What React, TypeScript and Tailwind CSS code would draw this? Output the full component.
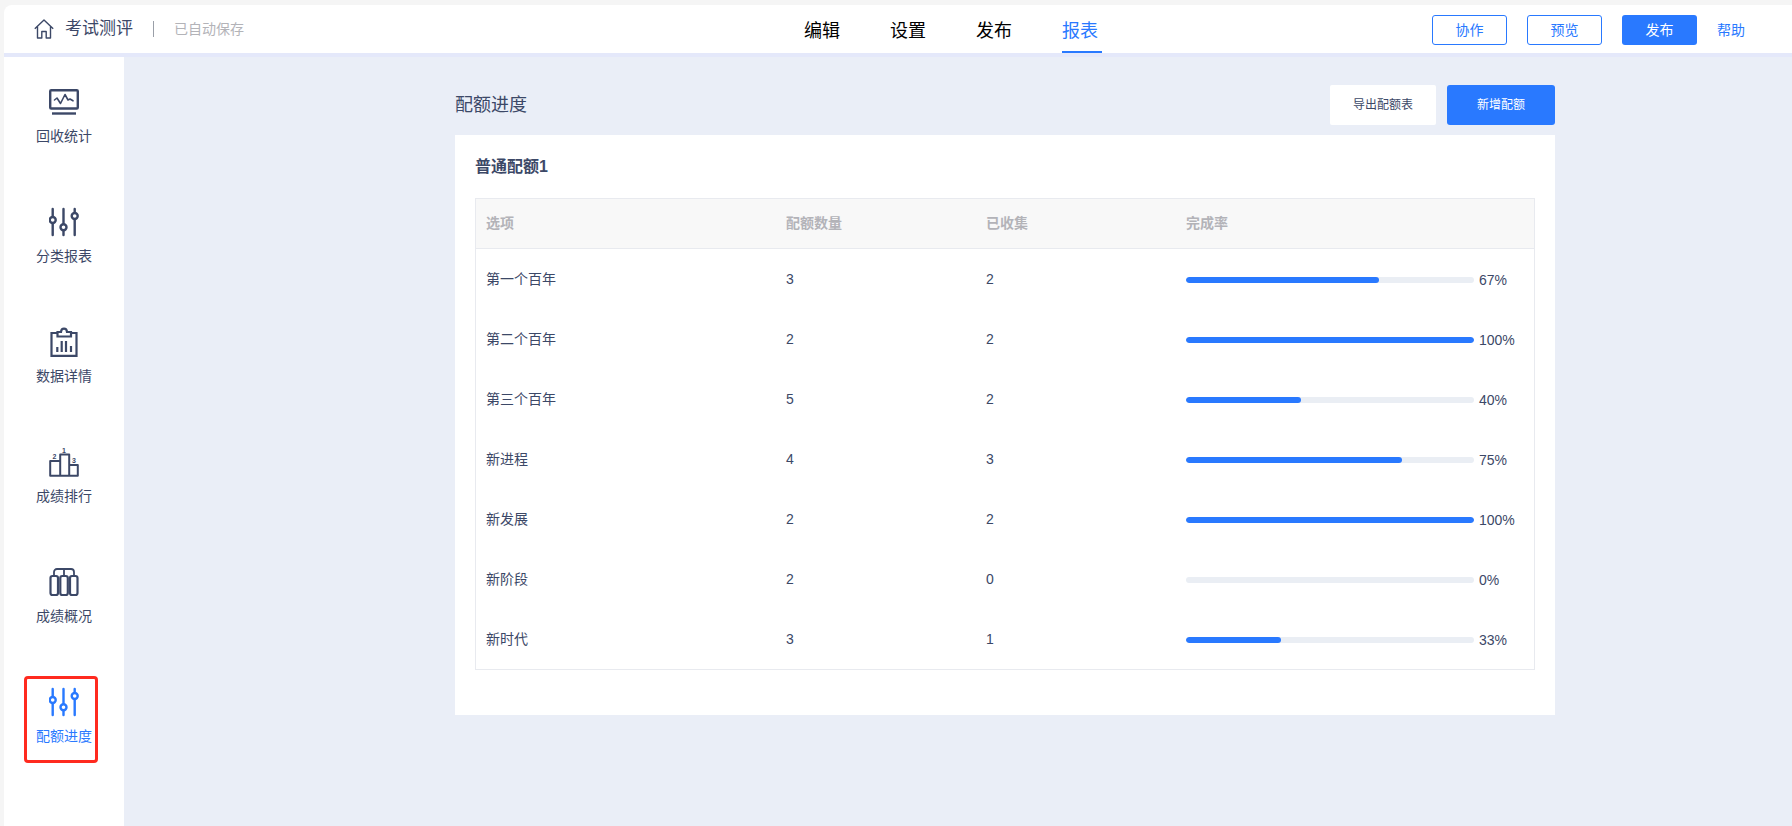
import { ReactNode } from "react";

const rows = [
  { name: "第一个百年", quota: 3, got: 2, pct: 67 },
  { name: "第二个百年", quota: 2, got: 2, pct: 100 },
  { name: "第三个百年", quota: 5, got: 2, pct: 40 },
  { name: "新进程", quota: 4, got: 3, pct: 75 },
  { name: "新发展", quota: 2, got: 2, pct: 100 },
  { name: "新阶段", quota: 2, got: 0, pct: 0 },
  { name: "新时代", quota: 3, got: 1, pct: 33 },
];

function Sliders() {
  return (
    <svg width="30" height="30" viewBox="0 0 30 30" fill="none" stroke="currentColor" strokeWidth="2.400" strokeLinecap="round">
      <path d="M3.700 2v7.500M3.700 16.500V28" />
      <circle cx="3.700" cy="13" r="3" />
      <path d="M14.500 2v14.800M14.500 23.800V28" />
      <circle cx="14.500" cy="20.300" r="3" />
      <path d="M25.700 2v3.500M25.700 12.500V28" />
      <circle cx="25.700" cy="9" r="3" />
    </svg>
  );
}

function Monitor() {
  return (
    <svg width="30" height="30" viewBox="0 0 30 30" fill="none" stroke="currentColor">
      <rect x="1.200" y="3.200" width="27.600" height="18.300" rx="1" strokeWidth="2.400" />
      <path d="M5.500 13l2.500-2 3.500 5.500 4.500-9 3 5.500 2-1 3 1.800" strokeWidth="1.600" strokeLinejoin="round" strokeLinecap="round" />
      <path d="M3 26.500h24" strokeWidth="2.400" />
    </svg>
  );
}

function Clipboard() {
  return (
    <svg width="30" height="30" viewBox="0 0 30 30" fill="none" stroke="currentColor" strokeWidth="2.200">
      <path d="M8 6H2.500V28.800H27.500V6H22.500" />
      <path d="M8.500 9.500V5H12c0.300-4.500 5.700-4.500 6 0H22v4.500z" />
      <path d="M8.300 25v-5M12.700 25v-11M17 25v-11M22 25v-6" strokeWidth="2.200" />
    </svg>
  );
}

function Podium() {
  return (
    <svg width="30" height="30" viewBox="0 0 30 30" fill="none" stroke="currentColor" strokeWidth="2" strokeLinejoin="round">
      <path d="M1.200 14h10v14.800h-10zM11.200 7.500h9V28.800h-9zM20.200 18h8.600v10.800h-8.600z" />
      <g fill="currentColor" stroke="none" fontSize="7" fontWeight="700" textAnchor="middle">
        <text x="15" y="5.500">1</text>
        <text x="5.500" y="12">2</text>
        <text x="25" y="16">3</text>
      </g>
    </svg>
  );
}

function Columns() {
  return (
    <svg width="30" height="30" viewBox="0 0 30 30" fill="none" stroke="currentColor" strokeWidth="2.200">
      <rect x="1.500" y="9" width="7.500" height="19" rx="2" />
      <rect x="11.300" y="9" width="7.500" height="19" rx="2" />
      <rect x="21" y="9" width="7.500" height="19" rx="2" />
      <path d="M5 9V5a3 3 0 0 1 3-3h14a3 3 0 0 1 3 3v4M15 2v7" strokeWidth="1.800" />
    </svg>
  );
}

function SideItem({ icon, label, active }: { icon: ReactNode; label: string; active?: boolean }) {
  return (
    <div className={`h-[120px] pt-[30px] flex flex-col items-center ${active ? "text-[#2979ff]" : "text-[#3c4867]"}`}>
      {icon}
      <div className="mt-[9px] text-[14px] leading-[20px]">{label}</div>
    </div>
  );
}

function OutlineBtn({ children }: { children: ReactNode }) {
  return (
    <div className="w-[75px] h-[30px] flex items-center justify-center border border-[#2979ff] rounded-[3px] text-[14px] text-[#2979ff]">
      {children}
    </div>
  );
}

export default function App() {
  return (
    <div
      className="w-[1792px] h-[826px] overflow-hidden relative bg-[#f5f5f5] pt-[5px] pl-[4px] flex flex-col text-[#3c4867]"
      style={{ fontFamily: '"Liberation Sans", "Noto Sans CJK SC", sans-serif' }}
    >
      <header className="h-[52px] shrink-0 bg-white rounded-tl-[8px] border-b-[4px] border-[#e4e8fa] flex items-center">
        <div className="w-[800px] pl-[30px] flex items-center">
          <svg width="20" height="20" viewBox="0 0 20 20" fill="none" stroke="#3c4867" strokeWidth="1.400" strokeLinejoin="round">
            <path d="M0.800 9.800L10 1l9.200 8.800M3.500 7.800V19h4.300v-6.500h4.400V19h4.300V7.800" />
          </svg>
          <span className="ml-[11px] text-[17px] leading-[24px]">考试测评</span>
          <span className="ml-[20px] w-px h-[16px] bg-[#9a9fa8]" />
          <span className="ml-[20px] text-[14px] text-[#b3b3b8]">已自动保存</span>
        </div>
        <nav className="flex items-center gap-[50px] text-[18px] text-black h-full pt-[4px]">
          <span className="w-[36px]">编辑</span>
          <span className="w-[36px]">设置</span>
          <span className="w-[36px]">发布</span>
          <span className="relative w-[36px] h-full flex items-center text-[#2979ff]">
            报表
            <span className="absolute left-0 bottom-0 w-[40px] h-[2px] bg-[#2979ff]" />
          </span>
        </nav>
        <div className="ml-auto flex items-center gap-[20px] pr-[47px] pt-[2px]">
          <OutlineBtn>协作</OutlineBtn>
          <OutlineBtn>预览</OutlineBtn>
          <div className="w-[75px] h-[30px] flex items-center justify-center rounded-[3px] bg-[#2979ff] text-white text-[14px]">发布</div>
          <span className="text-[14px] text-[#2979ff]">帮助</span>
        </div>
      </header>

      <div className="flex flex-1 min-h-0">
        <aside className="w-[120px] shrink-0 bg-white">
          <SideItem icon={<Monitor />} label="回收统计" />
          <SideItem icon={<Sliders />} label="分类报表" />
          <SideItem icon={<Clipboard />} label="数据详情" />
          <SideItem icon={<Podium />} label="成绩排行" />
          <SideItem icon={<Columns />} label="成绩概况" />
          <SideItem icon={<Sliders />} label="配额进度" active />
        </aside>

        <main className="flex-1 bg-[#eaeef7] pl-[331px] pt-[28px]">
          <div className="w-[1100px]">
            <div className="h-[40px] flex items-center">
              <h1 className="text-[18px] font-normal">配额进度</h1>
              <div className="ml-auto flex items-center gap-[11px]">
                <div className="w-[106px] h-[40px] flex items-center justify-center bg-white rounded-[2px] text-[12px]">导出配额表</div>
                <div className="w-[108px] h-[40px] flex items-center justify-center bg-[#2979ff] rounded-[3px] text-[12px] text-white">新增配额</div>
              </div>
            </div>

            <section className="mt-[10px] h-[580px] bg-white px-[20px] pt-[20px]">
              <h2 className="text-[16px] leading-[24px] font-bold">普通配额1</h2>
              <div className="mt-[19px] border border-[#e8eaef] text-[14px]">
                <div className="h-[50px] grid grid-cols-[300px_200px_200px_1fr] items-center bg-[#f8f8f8] border-b border-[#e8eaef] pl-[10px] text-[#b3b3b8] font-bold">
                  <span>选项</span>
                  <span>配额数量</span>
                  <span>已收集</span>
                  <span>完成率</span>
                </div>
                {rows.map((r) => (
                  <div key={r.name} className="h-[60px] grid grid-cols-[300px_200px_200px_1fr] items-center pl-[10px]">
                    <span>{r.name}</span>
                    <span>{r.quota}</span>
                    <span>{r.got}</span>
                    <div className="flex items-center pt-[2px]">
                      <div className="w-[288px] h-[6px] rounded-[3px] bg-[#eaeef4] overflow-hidden">
                        <div className="h-full rounded-[3px] bg-[#2979ff]" style={{ width: `${r.pct}%` }} />
                      </div>
                      <span className="ml-[5px]">{r.pct}%</span>
                    </div>
                  </div>
                ))}
              </div>
            </section>
          </div>
        </main>
      </div>

      {/* red annotation box around the active item */}
      <div className="absolute left-[24px] top-[676px] w-[74px] h-[87px] border-[3px] border-[#ff2a1f] rounded-[4px]" />
    </div>
  );
}
